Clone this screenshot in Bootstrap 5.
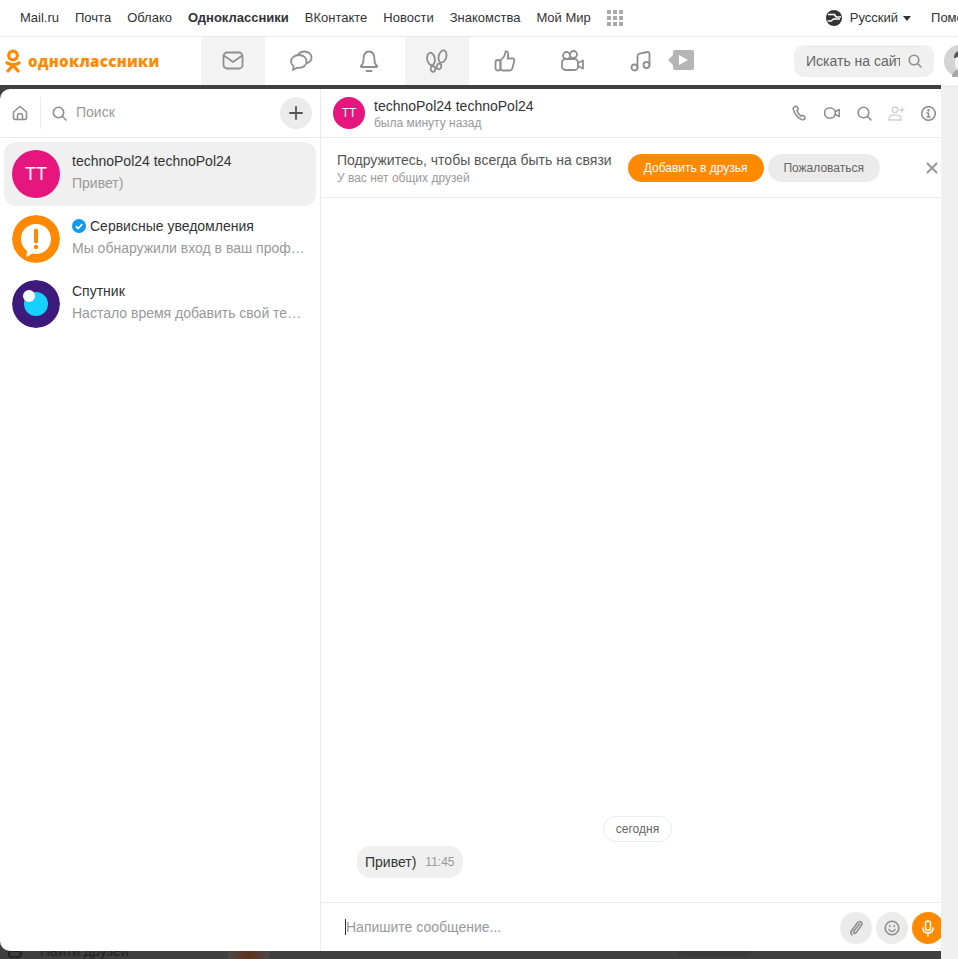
<!DOCTYPE html>
<html lang="ru">
<head>
    <meta charset="UTF-8">
    <meta name="viewport" content="width=device-width, initial-scale=1.0">
    <title>Одноклассники</title>
    <link href="https://cdn.jsdelivr.net/npm/bootstrap@5.3.0/dist/css/bootstrap.min.css" rel="stylesheet">
    <style>
        html, body { height: 959px; overflow: hidden; }
        body { font-family: "Liberation Sans", Arial, sans-serif; font-size: 14px; color: #333; background: #fff; }
        svg { display: block; flex: none; }
        .ic { fill: none; stroke: #8f8f8f; stroke-width: 1.6; stroke-linecap: round; stroke-linejoin: round; }

        /* portal line */
        .portal-bar { height: 37px; border-bottom: 1px solid #eaeaea; padding-left: 20px; font-size: 13px; white-space: nowrap; overflow: hidden; }
        .portal-bar a { color: #333; text-decoration: none; margin-right: 16px; }
        .portal-bar a.cur { font-weight: 700; }
        .apps-grid { display: grid; grid-template-columns: repeat(3, 4px); gap: 2px; }
        .apps-grid i { width: 4px; height: 4px; background: #aaa; }
        .lang-box { margin-left: 203px; }
        .lang-box span { margin: 0 5px 0 8px; }
        .lang-arrow { width: 0; height: 0; border: 4px solid transparent; border-top: 5px solid #333; border-bottom: 0; margin-right: 20px; }

        /* toolbar */
        .tool-bar { height: 48px; white-space: nowrap; overflow: hidden; }
        .logo-box { width: 201px; padding-left: 5px; flex: none; }
        .logo-text { color: #ff8a00; font-family: "Open Sans", sans-serif; font-weight: 800; font-size: 15px; letter-spacing: .35px; margin-left: 7px; }
        .tool-tab { width: 64px; height: 48px; margin-right: 4px; flex: none; }
        .tool-tab.on { background: #f3f3f3; }
        .tool-tab.last-tab { margin-right: 0; }
        .tool-tab .ic { stroke-width: 1.8; }
        .video-tag { margin-left: -5px; margin-bottom: 2px; }
        .site-search { width: 140px; height: 32px; background: #f0f0f0; border-radius: 10px; margin-left: 100px; padding: 0 12px; flex: none; }
        .site-search input { width: 94px; padding: 0; border: 0; background: transparent; box-shadow: none; font-size: 14px; color: #666; }
        .site-search input::placeholder { color: #666; opacity: 1; }
        .user-pic { margin-left: 10px; }

        /* dark overlay */
        .stage { height: 874px; background: #3f3f3f; padding-top: 4px; }
        .side-strip { width: 17px; background: #f0f0f0; flex: none; margin-top: -4px; }
        .msg-window { width: 941px; height: 862px; background: #fff; border-radius: 10px 0 0 10px; overflow: hidden; flex: none; }

        .left-col { width: 321px; border-right: 1px solid #eaeaea; flex: none; }
        .left-head { height: 49px; border-bottom: 1px solid #eaeaea; padding: 0 8px 0 12px; }
        .head-sep { width: 1px; height: 32px; background: #eaeaea; margin: 0 11px 0 12px; }
        .left-head .find-text { color: #999; margin-left: 9px; padding-bottom: 2px; }
        .round-btn { width: 32px; height: 32px; border-radius: 50%; background: #ebebeb; border: 0; padding: 0; flex: none; }

        .chat-list { padding: 4px 4px 0; }
        .chat-row { height: 64px; padding: 0 8px; border-radius: 12px; margin-bottom: 1px; }
        .chat-row.on { background: #f0f0f0; }
        .chat-pic { width: 48px; height: 48px; border-radius: 50%; margin-right: 12px; flex: none; }
        .pink-pic { background: #e6167e; color: #fff; font-size: 18px; }
        .chat-info { min-width: 0; width: 234px; line-height: 16px; padding-bottom: 4px; }
        .chat-name { color: #333; height: 16px; margin-bottom: 6px; }
        .chat-prev { color: #999; white-space: nowrap; overflow: hidden; text-overflow: ellipsis; }

        .right-col { min-width: 0; }
        .right-head { height: 49px; border-bottom: 1px solid #eaeaea; padding-left: 12px; }
        .head-pic { width: 32px; height: 32px; border-radius: 50%; background: #e6167e; color: #fff; font-size: 12px; margin-right: 9px; flex: none; }
        .head-text { padding-top: 2px; }
        .head-name { line-height: 17px; }
        .head-sub { font-size: 12px; color: #999; line-height: 16px; }
        .head-tools { margin-right: -3px; }
        .head-ic { width: 32px; height: 32px; }

        .friend-strip { height: 60px; border-bottom: 1px solid #eaeaea; padding-left: 16px; }
        .friend-copy { padding-top: 1px; }
        .friend-title { line-height: 18px; color: #555; margin-bottom: 1px; }
        .friend-sub { font-size: 12px; line-height: 16px; color: #999; }
        .pill-btn { height: 28px; border-radius: 14px; font-size: 12px; padding: 0; border: 0; }
        .pill-main { width: 136px; margin-left: 16px; background: #ff8a00; color: #fff; }
        .pill-main:hover { background: #ff8a00; color: #fff; }
        .pill-sec { width: 112px; margin-left: 4px; background: #ebebeb; color: #666; }
        .pill-sec:hover { background: #ebebeb; color: #666; }
        .close-x { margin-left: 46px; }

        .msg-area { padding-bottom: 24px; margin-right: -13px; }
        .date-pill { height: 26px; padding: 0 12px; border: 1px solid #eaeaea; border-radius: 13px; font-size: 12px; color: #666; margin: 0 auto 4px; }
        .msg-bubble { height: 32px; margin-left: 36px; padding: 0 8px; background: #f0f0f0; border-radius: 14px; color: #333; }
        .msg-time { font-size: 12px; color: #999; margin-left: 9px; }

        .composer { height: 49px; border-top: 1px solid #eaeaea; padding-left: 24px; }
        .composer input { padding: 0; border: 0; box-shadow: none; font-size: 14px; color: #333; }
        .composer input::placeholder { color: #999; opacity: 1; }
        .composer-caret { width: 1px; height: 16px; background: #333; flex: none; }
        .composer-btns { gap: 4px; margin-right: -3px; margin-top: 2px; }
        .round-btn.orange { background: #ff8a00; }

        /* page under the overlay, only its top edge shows */
        .under-page { height: 8px; overflow: hidden; color: #222; }
        .under-row { margin-top: -8px; padding-left: 8px; height: 16px; }
        .under-row span { margin-left: 18px; }
        .under-ic { width: 14px; height: 8px; border: 2px solid #222; border-radius: 4px; margin-top: 6px; flex: none; }
        .under-photo { width: 41px; height: 16px; margin-left: 99px; background: linear-gradient(90deg, #4a4a4a, #5b3524 40%, #5b3524 60%, #4a4a4a); flex: none; }
        .under-pill { width: 74px; height: 12px; margin-left: 408px; border-radius: 6px; background: #393939; flex: none; }
    </style>
</head>
<body>
    <!-- верхняя строка портала -->
    <div class="portal-bar d-flex align-items-center">
        <a href="#">Mail.ru</a>
        <a href="#">Почта</a>
        <a href="#">Облако</a>
        <a href="#" class="cur">Одноклассники</a>
        <a href="#">ВКонтакте</a>
        <a href="#">Новости</a>
        <a href="#">Знакомства</a>
        <a href="#">Мой Мир</a>
        <div class="apps-grid">
            <i></i><i></i><i></i><i></i><i></i><i></i><i></i><i></i><i></i>
        </div>
        <div class="lang-box d-flex align-items-center">
            <svg width="16" height="16" viewBox="0 0 16 16"><circle cx="8" cy="8" r="8" fill="#333"/><path d="M2 4.500h6.500l1.500 2.500h5M1.500 11H5l2.500-2H14" fill="none" stroke="#fff" stroke-width="1.600"/></svg>
            <span>Русский</span>
            <div class="lang-arrow"></div>
            <a href="#">Помощь</a>
        </div>
    </div>

    <!-- панель с логотипом и вкладками -->
    <div class="tool-bar d-flex align-items-center">
        <div class="logo-box d-flex align-items-center">
            <svg width="16" height="24" viewBox="0 0 16 24"><circle cx="8" cy="6.500" r="4.300" fill="none" stroke="#ff8a00" stroke-width="3.200"/><path d="M2 13.800c3.500 2.200 8.500 2.200 12 0M8 16l-5 6M8 16l5 6" fill="none" stroke="#ff8a00" stroke-width="3.200" stroke-linecap="round"/></svg>
            <span class="logo-text">одноклассники</span>
        </div>
        <div class="tool-tab on d-flex align-items-center justify-content-center">
            <svg class="ic" width="22" height="20" viewBox="0 0 22 20"><rect x="1.500" y="1.500" width="19" height="16" rx="3.500"/><path d="M2.500 5l8.500 6 8.500-6"/></svg>
        </div>
        <div class="tool-tab d-flex align-items-center justify-content-center">
            <svg class="ic" width="24" height="22" viewBox="0 0 24 22"><path d="M10 5c-4.500 0-8 2.800-8 6.500 0 2 1 3.600 2.500 4.800L4 20l4-2.300c.7.100 1.300.200 2 .2 4.500 0 7.500-2.800 7.500-6.400S14.500 5 10 5z"/><path d="M9 5.200C10 3 12.500 1.500 15.500 1.500c4 0 7 2.600 7 6 0 2.500-1.500 4.500-4 5.500"/></svg>
        </div>
        <div class="tool-tab d-flex align-items-center justify-content-center">
            <svg class="ic" width="20" height="24" viewBox="0 0 20 24"><path d="M2 17c1.800-1.500 2.500-3 2.500-6 0-5 2-8.500 5.500-8.500s5.500 3.500 5.500 8.500c0 3 .7 4.500 2.500 6 .5.500.2 1-.5 1H2.500c-.7 0-1-.5-.5-1z"/><path d="M7.500 22h5"/></svg>
        </div>
        <div class="tool-tab on d-flex align-items-center justify-content-center">
            <svg class="ic" width="22" height="24" viewBox="0 0 22 24"><ellipse cx="5" cy="10" rx="3.800" ry="6.300" transform="rotate(-10 5 10)"/><ellipse cx="7" cy="20" rx="2.300" ry="2.800" transform="rotate(-10 7 20)"/><ellipse cx="16.500" cy="7.500" rx="3.800" ry="6.300" transform="rotate(14 16.500 7.500)"/><ellipse cx="13" cy="17.500" rx="2.300" ry="2.800" transform="rotate(14 13 17.500)"/></svg>
        </div>
        <div class="tool-tab d-flex align-items-center justify-content-center">
            <svg class="ic" width="22" height="22" viewBox="0 0 22 22"><path d="M6.500 10c2.500-1.500 4.500-4 5-8.500 2.500-.5 3.500 2.500 2 7h5c1.500 0 2.200 1.300 1.800 2.500l-2 7.500c-.4 1.200-1.300 2-2.500 2H9c-1.500 0-2.500-1-2.500-2.500z"/><rect x="1.500" y="10" width="5" height="10.500" rx="2.500"/></svg>
        </div>
        <div class="tool-tab d-flex align-items-center justify-content-center">
            <svg class="ic" width="24" height="22" viewBox="0 0 24 22"><circle cx="5.500" cy="5.500" r="3.500"/><circle cx="12.500" cy="4.500" r="3.500"/><rect x="1" y="9" width="16" height="11" rx="3.500"/><path d="M17 13l5-2.500v8L17 16"/></svg>
        </div>
        <div class="tool-tab last-tab d-flex align-items-center justify-content-center">
            <svg class="ic" width="22" height="22" viewBox="0 0 22 22"><circle cx="4.500" cy="17.500" r="3"/><circle cx="16.500" cy="15" r="3"/><path d="M7.500 17.500V6c0-1.200.8-2 2-2.300L17.500 2c1.200-.2 2 .5 2 1.700V15"/></svg>
        </div>
        <svg class="video-tag" width="26" height="20" viewBox="0 0 26 20"><path d="M0 10l5-5V2c0-1 .7-2 2-2h17c1 0 2 1 2 2v16c0 1-1 2-2 2H7c-1.300 0-2-1-2-2v-3z" fill="#b5b5b5"/><path d="M11 5l9 5-9 5z" fill="#fff"/></svg>
        <div class="site-search d-flex align-items-center justify-content-between">
            <input type="text" class="form-control" placeholder="Искать на сайте">
            <svg class="ic" width="14" height="14" viewBox="0 0 14 14" stroke-width="1.500"><circle cx="6" cy="6" r="4.800"/><path d="M9.500 9.500L13 13"/></svg>
        </div>
        <svg class="user-pic" width="32" height="32" viewBox="0 0 32 32"><circle cx="16" cy="16" r="16" fill="#d4d4d4"/><path d="M8 32c0-5 3-7 8-7s8 2 8 7z" fill="#a8a8a8"/><rect x="11" y="9" width="10" height="15" rx="4" fill="#f2f2f2"/><path d="M10 13c0-5 3-7 6-7s6 2 6 7h-2c-1-2-7-2-8 0z" fill="#555"/></svg>
    </div>

    <!-- окно сообщений поверх затемнённой страницы -->
    <div class="stage d-flex">
        <div class="d-flex flex-column">
            <div class="msg-window d-flex">
                <div class="left-col d-flex flex-column">
                    <div class="left-head d-flex align-items-center">
                        <svg class="ic" width="16" height="16" viewBox="0 0 16 16" stroke-width="1.400"><path d="M1.500 7L8 1.500 14.500 7v5.500c0 1.200-.8 2-2 2h-9c-1.200 0-2-.8-2-2z"/><path d="M5.500 14.500V11c0-1.500 1-2.500 2.500-2.500s2.500 1 2.500 2.500v3.500"/></svg>
                        <div class="head-sep"></div>
                        <svg class="ic" width="15" height="15" viewBox="0 0 15 15" stroke-width="1.500"><circle cx="6.500" cy="6.500" r="5.200"/><path d="M10.500 10.500L14 14"/></svg>
                        <span class="find-text flex-grow-1">Поиск</span>
                        <button class="round-btn d-flex align-items-center justify-content-center" type="button">
                            <svg width="14" height="14" viewBox="0 0 14 14"><path d="M7 1v12M1 7h12" stroke="#555" stroke-width="1.800" stroke-linecap="round"/></svg>
                        </button>
                    </div>
                    <div class="chat-list">
                        <div class="chat-row on d-flex align-items-center">
                            <div class="chat-pic pink-pic d-flex align-items-center justify-content-center">ТТ</div>
                            <div class="chat-info">
                                <div class="chat-name">technoPol24 technoPol24</div>
                                <div class="chat-prev">Привет)</div>
                            </div>
                        </div>
                        <div class="chat-row d-flex align-items-center">
                            <svg class="chat-pic" width="48" height="48" viewBox="0 0 48 48"><circle cx="24" cy="24" r="24" fill="#ff8a00"/><path d="M24 9c-8.500 0-15 6.500-15 15 0 5 2.200 9 6 12l-.5 6 6-3.500c1.200.3 2.300.5 3.500.5 8.500 0 15-6.500 15-15S32.500 9 24 9z" fill="#fff"/><path d="M24 15.500v11" stroke="#ff8a00" stroke-width="4" stroke-linecap="round"/><circle cx="24" cy="32" r="2.200" fill="#ff8a00"/></svg>
                            <div class="chat-info">
                                <div class="chat-name d-flex align-items-center gap-1">
                                    <svg width="14" height="14" viewBox="0 0 14 14"><circle cx="7" cy="7" r="7" fill="#0d9af2"/><path d="M3.800 7.200l2.300 2.300 4.200-4.400" fill="none" stroke="#fff" stroke-width="1.700"/></svg>
                                    <span>Сервисные уведомления</span>
                                </div>
                                <div class="chat-prev">Мы обнаружили вход в ваш профиль</div>
                            </div>
                        </div>
                        <div class="chat-row d-flex align-items-center">
                            <svg class="chat-pic" width="48" height="48" viewBox="0 0 48 48"><circle cx="24" cy="24" r="24" fill="#3f1a7d"/><circle cx="24" cy="24" r="12" fill="#14d1ff"/><circle cx="17" cy="16" r="6" fill="#fff"/></svg>
                            <div class="chat-info">
                                <div class="chat-name">Спутник</div>
                                <div class="chat-prev">Настало время добавить свой текст</div>
                            </div>
                        </div>
                    </div>
                </div>

                <div class="right-col flex-grow-1 d-flex flex-column">
                    <div class="right-head d-flex align-items-center">
                        <div class="head-pic d-flex align-items-center justify-content-center">ТТ</div>
                        <div class="head-text flex-grow-1">
                            <div class="head-name">technoPol24 technoPol24</div>
                            <div class="head-sub">была минуту назад</div>
                        </div>
                        <div class="head-tools d-flex">
                            <div class="head-ic d-flex align-items-center justify-content-center">
                                <svg class="ic" width="16" height="16" viewBox="0 0 16 16" stroke-width="1.300"><path d="M3 1.500c-1.500.5-2 2-1.500 3.500 1.500 4 4.500 8 8 9.500 1.500.6 3 .2 3.500-1.200.3-.8 0-1.300-.6-1.800l-1.200-.9c-.7-.5-1.300-.4-1.900.2l-.5.500C7 9.500 5.500 7.500 5 5.500l.6-.5c.6-.5.700-1.100.4-1.800L5.200 2c-.5-.7-1.300-.8-2.200-.5z"/></svg>
                            </div>
                            <div class="head-ic d-flex align-items-center justify-content-center">
                                <svg class="ic" width="16" height="12" viewBox="0 0 16 12" stroke-width="1.300"><rect x=".7" y="1" width="10.500" height="10" rx="4.500"/><path d="M11.500 4.500l3.800-2v7l-3.800-2"/></svg>
                            </div>
                            <div class="head-ic d-flex align-items-center justify-content-center">
                                <svg class="ic" width="15" height="15" viewBox="0 0 15 15" stroke-width="1.400"><circle cx="6.500" cy="6.500" r="5.300"/><path d="M10.500 10.500L14 14"/></svg>
                            </div>
                            <div class="head-ic d-flex align-items-center justify-content-center">
                                <svg width="17" height="15" viewBox="0 0 17 15" fill="none" stroke="#cfcfcf" stroke-width="1.300" stroke-linecap="round"><circle cx="7" cy="3.800" r="2.800"/><path d="M1 14v-1.500C1 10 3.500 8.800 7 8.800s6 1.200 6 3.700V14z"/><path d="M14 2v4M12 4h4"/></svg>
                            </div>
                            <div class="head-ic d-flex align-items-center justify-content-center">
                                <svg class="ic" width="15" height="15" viewBox="0 0 15 15" stroke-width="1.300"><circle cx="7.500" cy="7.500" r="6.800"/><path d="M7.500 7v4M6 7h1.500M6 11h3"/><circle cx="7.500" cy="4.300" r=".6"/></svg>
                            </div>
                        </div>
                    </div>

                    <div class="friend-strip d-flex align-items-center">
                        <div class="friend-copy">
                            <div class="friend-title">Подружитесь, чтобы всегда быть на связи</div>
                            <div class="friend-sub">У вас нет общих друзей</div>
                        </div>
                        <button class="btn pill-btn pill-main" type="button">Добавить в друзья</button>
                        <button class="btn pill-btn pill-sec" type="button">Пожаловаться</button>
                        <svg class="close-x" width="12" height="12" viewBox="0 0 12 12"><path d="M1 1l10 10M11 1L1 11" stroke="#999" stroke-width="2"/></svg>
                    </div>

                    <div class="msg-area flex-grow-1 d-flex flex-column justify-content-end">
                        <div class="date-pill d-flex align-items-center">сегодня</div>
                        <div class="d-flex">
                            <div class="msg-bubble d-flex align-items-center">
                                <span>Привет)</span>
                                <span class="msg-time">11:45</span>
                            </div>
                        </div>
                    </div>

                    <div class="composer d-flex align-items-center">
                        <div class="composer-caret"></div>
                        <input type="text" class="form-control flex-grow-1" placeholder="Напишите сообщение...">
                        <div class="composer-btns d-flex">
                            <button class="round-btn d-flex align-items-center justify-content-center" type="button">
                                <svg class="ic" width="14" height="16" viewBox="0 0 14 16" stroke="#666"><path d="M10.500 4L5 11c-.8 1-.5 1.800 0 2.200s1.300.4 2-.5l5-6.700c1.300-1.700 1.100-3.200 0-4s-2.500-.6-3.700 1L3 10c-1.500 2-1.300 3.800 0 4.800"/></svg>
                            </button>
                            <button class="round-btn d-flex align-items-center justify-content-center" type="button">
                                <svg class="ic" width="16" height="16" viewBox="0 0 16 16" stroke-width="1.400"><circle cx="8" cy="8" r="6.800"/><path d="M5 9.500c.7 1.400 1.700 2 3 2s2.300-.6 3-2"/><path d="M5.800 5.800v.6M10.200 5.800v.6"/></svg>
                            </button>
                            <button class="round-btn orange d-flex align-items-center justify-content-center" type="button">
                                <svg width="12" height="17" viewBox="0 0 12 17" fill="none" stroke="#fff" stroke-width="1.500" stroke-linecap="round"><rect x="3.500" y="1" width="5" height="9.500" rx="2.500"/><path d="M1 8c0 3 2 5 5 5s5-2 5-5M6 13v3"/></svg>
                            </button>
                        </div>
                    </div>
                </div>
            </div>
            <div class="under-page">
                <div class="under-row d-flex align-items-center">
                    <div class="under-ic"></div>
                    <span>Найти друзей</span>
                    <div class="under-photo"></div>
                    <div class="under-pill"></div>
                </div>
            </div>
        </div>
        <div class="side-strip"></div>
    </div>

    <script src="https://cdn.jsdelivr.net/npm/bootstrap@5.3.0/dist/js/bootstrap.bundle.min.js"></script>
</body>
</html>
